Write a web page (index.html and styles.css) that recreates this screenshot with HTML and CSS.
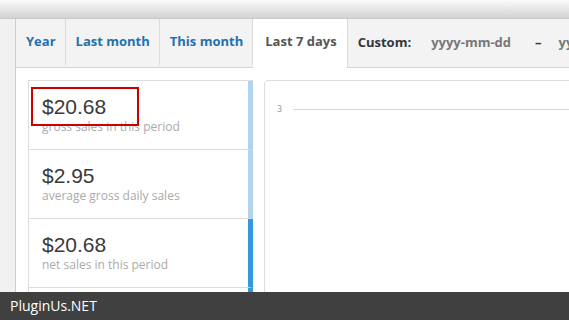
FILE: index.html
```html
<!DOCTYPE html>
<html>
  <head>
    <title>Reports - Last 7 days</title>
    <meta charset="UTF-8"/>
    <link rel="stylesheet" href="styles.css">
  </head>
  <body>
    <div class="topbar"></div>
    <div class="layout">
      <div class="sidebar"></div>
      <div class="main">
        <nav class="tabs">
          <a class="tab">Year</a>
          <a class="tab">Last month</a>
          <a class="tab">This month</a>
          <a class="tab active">Last 7 days</a>
          <div class="custom">
            <span class="custom-label">Custom:</span>
            <span class="date">yyyy-mm-dd</span>
            <span class="dash">&ndash;</span>
            <span class="date">yyyy-mm-dd</span>
          </div>
        </nav>
        <div class="report">
          <ul class="stats">
            <li class="stat">
              <strong class="amount">$20.68</strong>
              <span class="label">gross sales in this period</span>
              <div class="highlight"></div>
            </li>
            <li class="stat">
              <strong class="amount">$2.95</strong>
              <span class="label">average gross daily sales</span>
            </li>
            <li class="stat current">
              <strong class="amount">$20.68</strong>
              <span class="label">net sales in this period</span>
            </li>
            <li class="stat current filler"></li>
          </ul>
          <div class="chart">
            <div class="axis-row">
              <span class="tick">3</span>
              <div class="gridline"></div>
            </div>
          </div>
        </div>
      </div>
    </div>
    <div class="footer">PluginUs.NET</div>
  </body>
</html>
```
FILE: styles.css
```css
body {
  margin: 0;
  overflow: hidden;
  background: #f1f1f1;
  font-family: 'Open Sans', sans-serif;
  font-size: 13px;
  color: #333;
}
.topbar {
  height: 18px;
  background: linear-gradient(#fafafa, #d3d3d3);
  border-bottom: 1px solid #c8c8c8;
}
.layout {
  display: flex;
}
.sidebar {
  width: 15px;
  flex: none;
  border-right: 1px solid #cdcdcd;
  background: #f1f1f1;
}
.main {
  flex: none;
  width: 900px;
  background: #fff;
}
.tabs {
  display: flex;
  height: 48px;
  background: #f3f3f3;
  border-bottom: 1px solid #d4d4d4;
  white-space: nowrap;
}
.tab {
  display: flex;
  align-items: center;
  padding: 0 9px 2px 10px;
  font-weight: bold;
  color: #2271b1;
  border-right: 1px solid #dcdcdc;
  margin-bottom: 2px;
}
.tab.active {
  background: #fff;
  color: #555;
  margin-bottom: -1px;
  padding: 0 10px 5px 12px;
}
.custom {
  display: flex;
  align-items: center;
  padding: 0 0 2px 10px;
  font-weight: bold;
}
.custom-label {
  color: #32373c;
  margin-right: 20px;
}
.date {
  color: #777;
}
.dash {
  color: #32373c;
  margin: 0 17px 0 24px;
}
.report {
  display: flex;
  gap: 11px;
  padding: 12px 0 0 12px;
  height: 260px;
}
.stats {
  list-style: none;
  margin: 0;
  padding: 0;
  width: 224px;
  border: 1px solid #ddd;
  border-right: none;
  flex: none;
}
.stat {
  position: relative;
  padding: 14px 13px;
  border-bottom: 1px solid #ddd;
  border-right: 5px solid #b1d4ee;
}
.stat.current {
  border-right-color: #3498db;
}
.stat.filler {
  height: 40px;
}
.amount {
  display: block;
  font-family: 'Liberation Sans', Arial, sans-serif;
  font-weight: normal;
  font-size: 21px;
  line-height: 24px;
  color: #3a3a3a;
}
.label {
  display: block;
  font-size: 12px;
  line-height: 16px;
  color: #aaa;
}
.highlight {
  position: absolute;
  left: 2px;
  top: 6px;
  width: 104px;
  height: 35px;
  border: 2px solid #cc0000;
}
.chart {
  flex: 1;
  border: 1px solid #ddd;
  border-radius: 4px 0 0 0;
  padding-top: 23px;
}
.axis-row {
  display: flex;
  align-items: center;
  padding-left: 12px;
  height: 11px;
}
.tick {
  font-family: 'DejaVu Sans', sans-serif;
  font-size: 8px;
  color: #999;
  width: 16px;
}
.gridline {
  flex: 1;
  height: 1px;
  background: #d2dcd8;
}
.footer {
  position: fixed;
  left: 0;
  right: 0;
  bottom: 0;
  height: 28px;
  line-height: 27px;
  padding-left: 10px;
  background: #404040;
  color: #fff;
  font-size: 14px;
}
```
